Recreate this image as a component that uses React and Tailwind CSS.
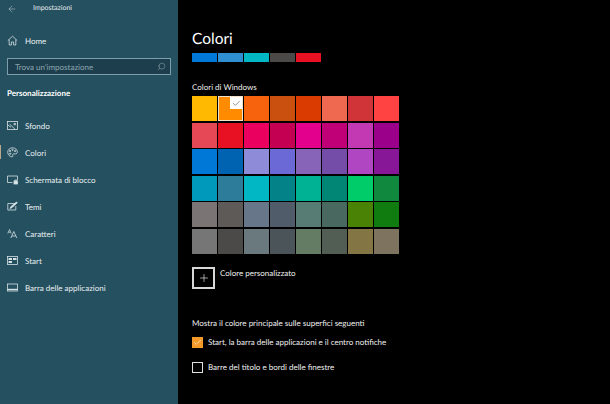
import { ArrowLeft, Check, Plus, Search } from 'lucide-react';

const recent = ['bg-[#0078d7]', 'bg-[#2f8fd0]', 'bg-[#00b7c3]', 'bg-[#4c4a48]', 'bg-[#e81123]'];

const palette = [
  'bg-[#ffb900]', 'bg-[#ff8c00]', 'bg-[#f7630c]', 'bg-[#ca5010]', 'bg-[#da3b01]', 'bg-[#ef6950]', 'bg-[#d13438]', 'bg-[#ff4343]',
  'bg-[#e74856]', 'bg-[#e81123]', 'bg-[#ea005e]', 'bg-[#c30052]', 'bg-[#e3008c]', 'bg-[#bf0077]', 'bg-[#c239b3]', 'bg-[#9a0089]',
  'bg-[#0078d7]', 'bg-[#0063b1]', 'bg-[#8e8cd8]', 'bg-[#6b69d6]', 'bg-[#8764b8]', 'bg-[#744da9]', 'bg-[#b146c2]', 'bg-[#881798]',
  'bg-[#0099bc]', 'bg-[#2d7d9a]', 'bg-[#00b7c3]', 'bg-[#038387]', 'bg-[#00b294]', 'bg-[#018574]', 'bg-[#00cc6a]', 'bg-[#10893e]',
  'bg-[#7a7574]', 'bg-[#5d5a58]', 'bg-[#68768a]', 'bg-[#515c6b]', 'bg-[#567c73]', 'bg-[#486860]', 'bg-[#498205]', 'bg-[#107c10]',
  'bg-[#767676]', 'bg-[#4c4a48]', 'bg-[#69797e]', 'bg-[#4a5459]', 'bg-[#647c64]', 'bg-[#525e54]', 'bg-[#847545]', 'bg-[#7e735f]',
];

function Icon({ children }) {
  return (
    <svg width="11" height="11" viewBox="0 0 11 11" fill="none" stroke="#d5e1e5" strokeWidth="0.8" className="shrink-0">
      {children}
    </svg>
  );
}

const HomeIcon = () => (
  <Icon>
    <path d="M0.8 5.6 5.5 1.2l4.700 4.400M2.200 4.600V10h2.200V7h2.200v3h2.200V4.600" />
  </Icon>
);
const PictureIcon = () => (
  <Icon>
    <rect x="0.5" y="1.5" width="10" height="8" />
    <path d="M0.8 5 4 7.200M2.500 4l5.500 5.200M7 3.400h1.600v1.400H7z" />
  </Icon>
);
const PaletteIcon = () => (
  <Icon>
    <path d="M5.500 0.800C2.700 0.800 0.700 2.800 0.700 5.200s1.900 4.600 4.300 4.600c1.200 0 0.900-1.100 0.700-1.600-.3-.8.2-1.300 1-1.300h1.700c1 0 1.900-.6 1.900-1.900C10.300 2.600 8.300 0.800 5.500 0.800z" />
    <circle cx="3" cy="4" r="0.7" />
    <circle cx="5.5" cy="2.8" r="0.7" />
    <circle cx="8" cy="4" r="0.7" />
    <circle cx="3.2" cy="6.7" r="0.7" />
  </Icon>
);
const LockScreenIcon = () => (
  <Icon>
    <path d="M5.500 8.500H0.500V2h10v4" />
    <rect x="7" y="7" width="3.500" height="3" fill="#d5e1e5" />
    <path d="M7.800 7V6h2v1" />
  </Icon>
);
const ThemesIcon = () => (
  <Icon>
    <path d="M8 2.500H0.800v6.500h8V5" />
    <path d="M3 7.500 4 5.500 9.500 1l.8.8L5 6.500z" fill="#d5e1e5" />
  </Icon>
);
const FontsIcon = () => (
  <Icon>
    <path d="M0.800 5.500 2.500 1.500 4.200 5.500M1.400 4.200h2.200" strokeWidth="0.7" />
    <path d="M3.800 10 6.800 3.500 9.800 10M4.900 8h3.800" />
  </Icon>
);
const StartIcon = () => (
  <Icon>
    <rect x="0.500" y="1.500" width="10" height="8" />
    <path d="M1.500 3h3.500v2H1.500zM6 3h3.500v2H6zM1.500 6h3.500v2H1.500z" fill="#d5e1e5" stroke="none" />
  </Icon>
);
const TaskbarIcon = () => (
  <Icon>
    <rect x="0.500" y="2" width="10" height="7" />
    <path d="M0.500 7.500h10" strokeWidth="1.400" />
  </Icon>
);

const navItems = [
  { label: 'Sfondo', icon: PictureIcon },
  { label: 'Colori', icon: PaletteIcon, active: true },
  { label: 'Schermata di blocco', icon: LockScreenIcon },
  { label: 'Temi', icon: ThemesIcon },
  { label: 'Caratteri', icon: FontsIcon },
  { label: 'Start', icon: StartIcon },
  { label: 'Barra delle applicazioni', icon: TaskbarIcon },
];

function NavRow({ label, icon: NavIcon, active }) {
  return (
    <div className="relative flex h-[27px] items-center gap-[7px] pl-[7px]">
      {active && <span className="absolute left-0 top-[6px] h-[14px] w-px bg-[#b9a88c]" />}
      <NavIcon />
      <span>{label}</span>
    </div>
  );
}

export default function App() {
  return (
    <div className="flex h-[404px] w-[610px] overflow-hidden bg-black font-['Lato',sans-serif] text-[8px] leading-none text-[#f0f0f0] [text-rendering:geometricPrecision]">
      <aside className="flex w-[178px] shrink-0 flex-col bg-[#25505f] text-[#e8eff1]">
        <div className="flex h-[17px] items-center pl-[7px]">
          <ArrowLeft size={10} strokeWidth={1} />
          <span className="ml-[16px] text-[7px]">Impostazioni</span>
        </div>
        <div className="mt-[10px] flex h-[27px] items-center gap-[7px] pl-[7px]">
          <HomeIcon />
          <span>Home</span>
        </div>
        <div className="mx-[7px] mt-[4px] flex h-[17px] items-center justify-between border border-[#7d9eaa] bg-[#1c3e4d] pl-[7px] pr-[4px] text-[#8fa6b0]">
          <span>Trova un'impostazione</span>
          <Search size={9} strokeWidth={1} className="-scale-x-100 text-[#c5d3d8]" />
        </div>
        <div className="mt-[14px] pl-[7px] font-bold text-white">Personalizzazione</div>
        <nav className="mt-[15px]">
          {navItems.map((item) => (
            <NavRow key={item.label} {...item} />
          ))}
        </nav>
      </aside>

      <main className="flex-1 pl-[14px] pt-[28px]">
        <h1 className="text-[15.500px] leading-[23px] text-white">Colori</h1>
        <div className="mt-[2px] flex gap-px">
          {recent.map((c, i) => (
            <div key={i} className={`h-[9px] w-[25px] ${c}`} />
          ))}
        </div>

        <div className="mt-[19px] h-[14px] leading-[12px]">Colori di Windows</div>

        <div className="mt-[1px] grid w-[207px] grid-cols-[repeat(8,25px)] gap-x-px gap-y-[1.500px]">
          {palette.map((c, i) => (
            <div key={i} className={`relative h-[25px] ${c} ${i === 1 ? 'border border-[#f3e2c8]' : ''}`}>
              {i === 1 && (
                <span className="absolute right-0 top-0 flex h-[12px] w-[12px] items-center justify-center bg-white">
                  <Check size={9} strokeWidth={1.500} className="text-[#444]" />
                </span>
              )}
            </div>
          ))}
        </div>

        <div className="mt-[13px] flex items-start gap-[5px]">
          <div className="flex h-[22px] w-[23px] items-center justify-center border-2 border-[#d8d8d8]">
            <Plus size={12} strokeWidth={1.200} className="text-white" />
          </div>
          <span className="mt-[2px]">Colore personalizzato</span>
        </div>

        <div className="mt-[30px]">Mostra il colore principale sulle superfici seguenti</div>

        <div className="mt-[10px] flex items-center gap-[5px]">
          <span className="flex h-[11px] w-[11px] items-center justify-center bg-[#f39a2b]">
            <Check size={9} strokeWidth={1.500} className="text-white" />
          </span>
          <span>Start, la barra delle applicazioni e il centro notifiche</span>
        </div>
        <div className="mt-[14px] flex items-center gap-[5px]">
          <span className="h-[11px] w-[11px] border border-[#e0e0e0]" />
          <span>Barre del titolo e bordi delle finestre</span>
        </div>
      </main>
    </div>
  );
}
